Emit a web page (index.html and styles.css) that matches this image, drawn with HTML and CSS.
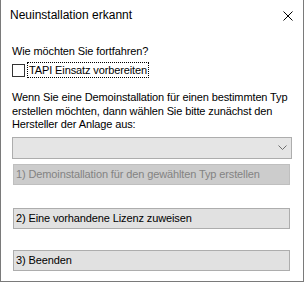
FILE: index.html
```html
<!DOCTYPE html>
<html lang="de">
<head>
    <meta charset="UTF-8">
    <title>Neuinstallation erkannt</title>
    <link rel="stylesheet" href="styles.css">
</head>
<body>

<div class="window">
    <!-- Titelleiste -->
    <div class="titlebar">
        <span class="title">Neuinstallation erkannt</span>
        <svg class="close" width="10" height="10" viewBox="0 0 10 10">
            <path d="M0.5 0.5 L9.5 9.5 M9.5 0.5 L0.5 9.5" stroke="#000" stroke-width="1" fill="none"/>
        </svg>
    </div>

    <div class="content">
        <p class="question">Wie möchten Sie fortfahren?</p>

        <div class="check-row">
            <span class="checkbox"></span>
            <span class="check-label">TAPI Einsatz vorbereiten</span>
        </div>

        <p class="info">Wenn Sie eine Demoinstallation für einen bestimmten Typ erstellen möchten, dann wählen Sie bitte zunächst den Hersteller der Anlage aus:</p>

        <div class="combo">
            <svg class="chevron" width="9" height="5" viewBox="0 0 9 5">
                <polyline points="0.5,0.5 4.5,4.5 8.5,0.5" stroke="#6d6d6d" stroke-width="1" fill="none"/>
            </svg>
        </div>

        <div class="button disabled">1) Demoinstallation für den gewählten Typ erstellen</div>
        <div class="button second">2) Eine vorhandene Lizenz zuweisen</div>
        <div class="button third">3) Beenden</div>
    </div>
</div>

</body>
</html>
```

FILE: styles.css
```css
body {
    margin: 0;
    background: #fff;
    font-family: "Liberation Sans", Arial, sans-serif;
    font-size: 11px;
    letter-spacing: -0.12px;
    color: #000;
}

.window {
    width: 302px;
    height: 281px;
    border: 1px solid #7a7a7a;
    border-top: none;
    background: #fff;
}

.titlebar {
    display: flex;
    justify-content: space-between;
    align-items: flex-start;
    padding: 7px 10px 0 9px;
    height: 30px;
    box-sizing: border-box;
}

.title {
    font-size: 12px;
    line-height: 16px;
    letter-spacing: 0;
}

.close {
    margin-top: 4px;
}

.content {
    padding: 14px 0 0 11px;
}

.question {
    margin: 0;
    line-height: 14px;
}

.check-row {
    display: flex;
    align-items: center;
    gap: 2px;
    margin-top: 4px;
}

.checkbox {
    width: 11px;
    height: 11px;
    border: 1px solid #333;
    background: #fff;
}

.check-label {
    border: 1px dotted #000;
    padding: 0 1px;
    line-height: 14px;
}

.info {
    margin: 13px 0 0 0;
    line-height: 13.5px;
    width: 285px;
}

.combo {
    display: flex;
    justify-content: flex-end;
    align-items: center;
    width: 278px;
    height: 20px;
    margin-top: 5px;
    border: 1px solid #adadad;
    background: #e5e5e5;
}

.chevron {
    margin-right: 4px;
}

.button {
    width: 273px;
    height: 19px;
    margin-left: 1px;
    padding-left: 2px;
    border: 1px solid #adadad;
    background: #e1e1e1;
    line-height: 19px;
    white-space: nowrap;
}

.button.disabled {
    margin-top: 5px;
    border-color: #bfbfbf;
    background: #cccccc;
    color: #838383;
}

.button.second {
    margin-top: 23px;
}

.button.third {
    margin-top: 21px;
}
```
